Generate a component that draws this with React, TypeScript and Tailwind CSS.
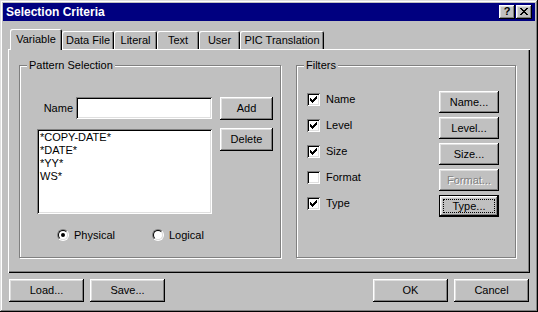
import { ReactNode } from "react";

const raised =
  "shadow-[inset_-1px_-1px_#000000,inset_1px_1px_#ffffff,inset_-2px_-2px_#808080,inset_2px_2px_#dfdfdf]";
const sunken =
  "shadow-[inset_1px_1px_#808080,inset_-1px_-1px_#ffffff,inset_2px_2px_#000000,inset_-2px_-2px_#dfdfdf]";

interface BtnProps {
  children: ReactNode;
  className?: string;
  disabled?: boolean;
  focused?: boolean;
}

const Btn = ({ children, className = "", disabled, focused }: BtnProps) => {
  if (focused) {
    return (
      <div className={`border border-black bg-[#c0c0c0] ${className}`}>
        <div className={`flex h-full w-full items-center justify-center p-[3px] ${raised}`}>
          <span className="flex h-full w-full items-center justify-center border border-dotted border-black leading-none">
            {children}
          </span>
        </div>
      </div>
    );
  }
  return (
    <div
      className={`flex items-center justify-center bg-[#c0c0c0] ${raised} ${
        disabled ? "text-[#808080] [text-shadow:1px_1px_0_#ffffff]" : "text-black"
      } ${className}`}
    >
      {children}
    </div>
  );
};

const Check = ({ checked }: { checked: boolean }) => (
  <div className={`relative h-[13px] w-[13px] shrink-0 bg-white ${sunken}`}>
    {checked && (
      <svg
        width="7"
        height="7"
        viewBox="0 0 7 7"
        shapeRendering="crispEdges"
        className="absolute left-[3px] top-[3px]"
      >
        <path
          d="M6 0h1v1h-1z M5 1h2v1h-2z M0 2h1v1h-1z M4 2h3v1h-3z M0 3h2v1h-2z M3 3h3v1h-3z M0 4h5v1h-5z M1 5h3v1h-3z M2 6h1v1h-1z"
          fill="#000"
        />
      </svg>
    )}
  </div>
);

const Radio = ({ checked }: { checked: boolean }) => (
  <div className="h-[12px] w-[12px] shrink-0 rounded-full border border-b-white border-l-[#808080] border-r-white border-t-[#808080]">
    <div className="flex h-full w-full items-center justify-center rounded-full border border-b-[#dfdfdf] border-l-black border-r-[#dfdfdf] border-t-black bg-white">
      {checked && <div className="h-[4px] w-[4px] rounded-full bg-black" />}
    </div>
  </div>
);

const Group = ({
  label,
  className,
  children,
}: {
  label: string;
  className: string;
  children: ReactNode;
}) => (
  <div
    className={`relative border border-[#808080] shadow-[inset_1px_1px_#ffffff,1px_1px_0_#ffffff] ${className}`}
  >
    <span className="absolute left-[7px] top-[-7px] bg-[#c0c0c0] px-[2px] leading-[13px]">
      {label}
    </span>
    {children}
  </div>
);

const tabs = ["Data File", "Literal", "Text", "User", "PIC Translation"];
const tabWidths = ["w-[52px]", "w-[43px]", "w-[42px]", "w-[41px]", "w-[84px]"];

const filters = [
  { name: "Name", checked: true },
  { name: "Level", checked: true },
  { name: "Size", checked: true },
  { name: "Format", checked: false },
  { name: "Type", checked: true },
];

export default function App() {
  return (
    <div
      className={`flex h-[312px] w-[538px] flex-col bg-[#c0c0c0] p-[3px] font-['Liberation_Sans',Arial,sans-serif] text-[11px] text-black shadow-[inset_-1px_-1px_#000000,inset_1px_1px_#dfdfdf,inset_-2px_-2px_#808080,inset_2px_2px_#ffffff]`}
    >
      {/* title bar */}
      <div className="flex h-[18px] items-center bg-[#000080] pl-[3px] pr-[3px]">
        <span className="text-[12px] font-bold text-white">Selection Criteria</span>
        <div className="ml-auto flex gap-[1px]">
          <div className={`flex h-[14px] w-[16px] items-center justify-center bg-[#c0c0c0] ${raised}`}>
            <span className="-mt-px text-[11px] font-bold leading-none">?</span>
          </div>
          <div className={`flex h-[14px] w-[16px] items-center justify-center bg-[#c0c0c0] ${raised}`}>
            <svg width="8" height="7" viewBox="0 0 8 7" shapeRendering="crispEdges" className="-mt-px">
              <path
                d="M0 0h2v1h-2z M6 0h2v1h-2z M1 1h2v1h-2z M5 1h2v1h-2z M2 2h4v1h-4z M3 3h2v1h-2z M2 4h4v1h-4z M1 5h2v1h-2z M5 5h2v1h-2z M0 6h2v1h-2z M6 6h2v1h-2z"
                fill="#000"
              />
            </svg>
          </div>
        </div>
      </div>

      {/* tabs */}
      <div className="relative z-10 mx-[5px] mt-[8px] -mb-px flex items-end pl-[2px]">
        <div className="flex h-[21px] w-[52px] items-center justify-center rounded-t-[2px] bg-[#c0c0c0] shadow-[inset_1px_1px_#ffffff,inset_-1px_0_#000000,inset_-2px_0_#808080]">
          Variable
        </div>
        {tabs.map((t, i) => (
          <div
            key={t}
            className={`mb-px flex h-[18px] items-center justify-center rounded-t-[2px] pt-px shadow-[inset_1px_1px_#ffffff,inset_-1px_0_#000000,inset_-2px_0_#808080] ${tabWidths[i]}`}
          >
            {t}
          </div>
        ))}
      </div>

      {/* panel */}
      <div className="mx-[5px] flex h-[224px] pl-[11px] pt-[16px] shadow-[inset_1px_1px_#ffffff,inset_-1px_-1px_#000000,inset_-2px_-2px_#808080]">
        <Group label="Pattern Selection" className="h-[193px] w-[262px] pt-[31px]">
          <div className="flex items-start pl-[25px]">
            <div className="flex h-[22px] w-[31px] items-center justify-end pr-[3px]">Name</div>
            <div className={`h-[22px] w-[136px] bg-white ${sunken}`} />
            <Btn className="ml-[8px] h-[23px] w-[53px]">Add</Btn>
          </div>
          <div className="mt-[9px] flex items-start pl-[17px]">
            <div className={`h-[85px] w-[175px] bg-white px-[3px] pt-[2px] leading-[13px] ${sunken}`}>
              <div>*COPY-DATE*</div>
              <div>*DATE*</div>
              <div>*YY*</div>
              <div>WS*</div>
            </div>
            <Btn className="-mt-px ml-[8px] h-[23px] w-[53px]">Delete</Btn>
          </div>
          <div className="mt-[13px] flex items-center pl-[37px]">
            <div className="flex w-[95px] items-center gap-[5px]">
              <Radio checked />
              <span>Physical</span>
            </div>
            <div className="flex items-center gap-[5px]">
              <Radio checked={false} />
              <span>Logical</span>
            </div>
          </div>
        </Group>

        <Group label="Filters" className="ml-[15px] h-[193px] w-[220px] pl-[10px] pr-[16px] pt-[25px]">
          {filters.map((f) => (
            <div key={f.name} className="mb-[4px] flex h-[22px] items-start justify-between">
              <div className="flex h-[16px] items-center gap-[6px]">
                <Check checked={f.checked} />
                <span>{f.name}</span>
              </div>
              <Btn
                className="h-[22px] w-[60px]"
                disabled={f.name === "Format"}
                focused={f.name === "Type"}
              >
                {f.name}...
              </Btn>
            </div>
          ))}
        </Group>
      </div>

      {/* bottom buttons */}
      <div className="mt-[6px] flex px-[6px]">
        <Btn className="h-[23px] w-[75px]">Load...</Btn>
        <Btn className="ml-[6px] h-[23px] w-[75px]">Save...</Btn>
        <Btn className="ml-auto h-[23px] w-[75px]">OK</Btn>
        <Btn className="ml-[6px] h-[23px] w-[75px]">Cancel</Btn>
      </div>
    </div>
  );
}
